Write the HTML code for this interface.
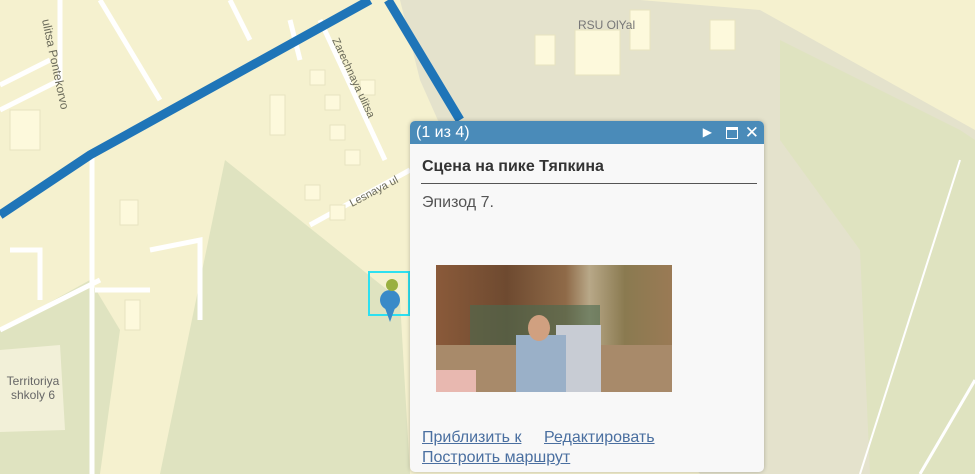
<!DOCTYPE html>
<html><head><meta charset="utf-8"><style>
body{margin:0;width:975px;height:474px;overflow:hidden;position:relative;font-family:"Liberation Sans",sans-serif;background:#f5f1cf}
svg{position:absolute;left:0;top:0}
.pop{position:absolute;left:410px;top:121px;width:354px;height:351px;background:#f8f8f8;border-radius:5px;box-shadow:0 0 4px rgba(0,0,0,.25);overflow:hidden}
.hd{height:23px;background:#4a8bb9;color:#fff;font-size:16px;line-height:23px;padding-left:6px;position:relative}
.t{position:absolute;left:12px;top:37px;font-size:16px;color:#333;font-weight:bold}
.ln{position:absolute;left:11px;top:62px;width:336px;height:1px;background:#555}
.ep{position:absolute;left:12px;top:73px;font-size:16px;color:#555}
.img{position:absolute;left:26px;top:144px;width:236px;height:127px;overflow:hidden;background:linear-gradient(90deg,#8a5a3a 0%,#6e4a30 30%,#8f6a48 55%,#b8a888 65%,#8a7a50 80%,#9a7a55 100%)}
.lk{position:absolute;left:12px;font-size:16px;color:#4a6fa0;text-decoration:underline}
</style></head><body>
<svg width="975" height="474" viewBox="0 0 975 474">
<rect width="975" height="474" fill="#f5f1cf"/>
<polygon points="400,0 975,0 975,474 700,474 560,300 460,170 420,80" fill="#e4e2cc"/>
<polygon points="640,0 975,0 975,130 760,10" fill="#f5f1cf"/>
<polygon points="780,40 960,130 975,140 975,474 870,474 860,250 780,140" fill="#dfe3c0"/>
<polygon points="225,160 400,300 410,474 160,474" fill="#dfe3c0"/>
<polygon points="0,330 90,280 120,330 100,474 0,474" fill="#dfe3c0"/>
<polygon points="0,350 60,345 65,430 0,432" fill="#f2f0d8"/>
<g stroke="#fff" stroke-width="5" fill="none">
<path d="M92,150 L92,474"/><path d="M0,330 L100,280"/><path d="M60,0 L60,80 L0,110"/>
<path d="M100,0 L160,100"/><path d="M230,0 L250,40"/><path d="M290,20 L300,60"/>
<path d="M150,250 L200,240 L200,320"/><path d="M95,290 L150,290"/>
<path d="M320,20 L385,160"/><path d="M310,225 L410,170"/>
<path d="M50,60 L0,85"/><path d="M10,250 L40,250 L40,300"/>
<path d="M960,160 L860,474" stroke-width="2"/><path d="M975,380 L920,474" stroke-width="3"/>
</g>
<g fill="#fdf9dc" stroke="#e8e4c0">
<rect x="10" y="110" width="30" height="40"/><rect x="120" y="200" width="18" height="25"/><rect x="125" y="300" width="15" height="30"/>
<rect x="270" y="95" width="15" height="40"/><rect x="310" y="70" width="15" height="15"/><rect x="325" y="95" width="15" height="15"/>
<rect x="330" y="125" width="15" height="15"/><rect x="345" y="150" width="15" height="15"/><rect x="360" y="80" width="15" height="15"/>
<rect x="535" y="35" width="20" height="30"/><rect x="575" y="30" width="45" height="45"/><rect x="630" y="10" width="20" height="40"/>
<rect x="710" y="20" width="25" height="30"/><rect x="305" y="185" width="15" height="15"/><rect x="330" y="205" width="15" height="15"/>
</g>
<path d="M0,215 L90,155 L370,0" stroke="#1f75b8" stroke-width="9" fill="none"/>
<path d="M388,0 L460,120" stroke="#1f75b8" stroke-width="9" fill="none"/>
<text x="578" y="29" font-size="12" fill="#777">RSU OlYal</text>
<text x="0" y="0" font-size="12" fill="#6a6a5a" transform="translate(42,20) rotate(78)">ulitsa Pontekorvo</text>
<text x="0" y="0" font-size="11" fill="#6a6a5a" transform="translate(332,40) rotate(65)">Zarechnaya ulitsa</text>
<text x="0" y="0" font-size="11" fill="#6a6a5a" transform="translate(352,207) rotate(-28)">Lesnaya ul</text>
<text x="33" y="385" font-size="12" fill="#666" text-anchor="middle">Territoriya</text>
<text x="33" y="399" font-size="12" fill="#666" text-anchor="middle">shkoly 6</text>
<rect x="369" y="272" width="40" height="43" fill="none" stroke="#2ee0f0" stroke-width="2"/>
<circle cx="390" cy="300" r="10" fill="#3a8ac8"/>
<path d="M385,308 L390,322 L395,308Z" fill="#3a8ac8"/>
<circle cx="392" cy="285" r="6" fill="#9ab040"/>
</svg>
<div class="pop">
<div class="hd">(1 из 4)
<span style="position:absolute;right:52px;top:0;font-size:12px">▶</span>
<span style="position:absolute;right:26px;top:6px;width:10px;height:8px;border:1.5px solid #fff;border-top-width:3px"></span>
<span style="position:absolute;right:5px;top:0;font-size:17px">✕</span></div>
<div class="t">Сцена на пике Тяпкина</div>
<div class="ln"></div>
<div class="ep">Эпизод 7.</div>
<div class="img">
<div style="position:absolute;left:34px;top:40px;width:130px;height:87px;background:#4a6a50;opacity:.6"></div>
<div style="position:absolute;left:0;top:80px;width:236px;height:47px;background:#a88a6a"></div>
<div style="position:absolute;left:120px;top:60px;width:45px;height:67px;background:#c8ccd4"></div>
<div style="position:absolute;left:80px;top:70px;width:50px;height:57px;background:#9ab0c8"></div>
<div style="position:absolute;left:92px;top:50px;width:22px;height:26px;border-radius:50%;background:#d0a080"></div>
<div style="position:absolute;left:0;top:105px;width:40px;height:22px;background:#e8b8b0"></div>
</div>
<div class="lk" style="top:308px">Приблизить к</div>
<div class="lk" style="top:308px;left:134px">Редактировать</div>
<div class="lk" style="top:328px">Построить маршрут</div>
</div>
</body></html>
